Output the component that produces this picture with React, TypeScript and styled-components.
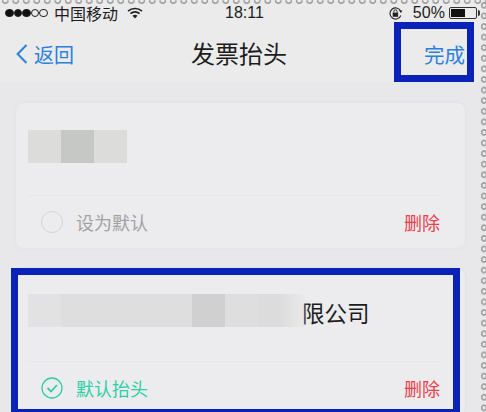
import React from 'react';
import styled, { createGlobalStyle } from 'styled-components';

const GlobalStyle = createGlobalStyle`
  html, body {
    margin:0;
    padding:0;
    background:#e9e9eb;
  }
  * {
    box-sizing:border-box;
  }
`;

const colors = {
  blue: '#2b80dc',
  mark: '#0a22b8',
  red: '#e8404c',
  teal: '#2ccfa6',
  gray: '#a2a2a2',
  black: '#1c1c1c',
};

const Page = styled.div`
  position:relative;
  width:486px;
  height:412px;
  overflow:hidden;
  background:#e8e8ea;
  font-family:"Liberation Sans","Noto Sans CJK SC",sans-serif;
  color:${colors.black};
`;

const PerfTop = styled.div`
  position:absolute;
  top:-3px;
  left:0;
  right:0;
  height:7px;
  background:radial-gradient(circle at center,#efefef 0 1.6px,#a3a3a3 2.2px 3.3px,transparent 3.8px) 0 0 / 10.5px 7px repeat-x;
`;

const PerfRight = styled.div`
  position:absolute;
  top:0;
  right:0;
  bottom:0;
  width:8px;
  background:radial-gradient(circle at center,#efefef 0 1.2px,#a3a3a3 1.8px 3px,transparent 3.5px) 2px 0 / 8px 10.6px repeat-y;
`;

const Header = styled.header`
  background:#ebebec;
`;

const StatusBar = styled.div`
  display:flex;
  align-items:center;
  height:26px;
  padding:0 0 0 5px;
  font-size:16px;
`;

const Signal = styled.div`
  display:flex;
  flex:none;
  width:49px;
`;

const Dot = styled.span<{ $on?: boolean }>`
  width:8.5px;
  height:8.5px;
  border-radius:50%;
  border:1px solid #222;
  background:${p => (p.$on ? '#111' : 'transparent')};
`;

const Carrier = styled.span`
  flex:none;
  width:73px;
`;

const Clock = styled.span`
  flex:none;
  margin:0 124px 0 82px;
`;

const Percent = styled.span`
  flex:none;
  width:30px;
  margin:0 6px 0 10px;
`;

const Battery = styled.div`
  position:relative;
  flex:none;
  width:28px;
  height:12px;
  padding:1px;
  border:1px solid #333;
  border-radius:2px;
  &:after {
    content:'';
    position:absolute;
    top:2px;
    right:-4px;
    width:2px;
    height:6px;
    background:#333;
    border-radius:0 2px 2px 0;
  }
`;

const BatteryLevel = styled.div`
  width:14px;
  height:100%;
  background:#111;
`;

const NavBar = styled.nav`
  display:flex;
  align-items:center;
  justify-content:space-between;
  height:56px;
  padding:0 21px 0 16px;
`;

const BackLink = styled.span`
  display:flex;
  align-items:center;
  gap:6px;
  font-size:20px;
  color:${colors.blue};
`;

const Title = styled.h1`
  margin:1px 16px 0 -4px;
  font-size:24px;
  font-weight:400;
  line-height:1;
`;

const DoneLink = styled.span`
  position:relative;
  font-size:20.5px;
  color:${colors.blue};
`;

const DoneMark = styled.div`
  position:absolute;
  top:-17px;
  right:-9px;
  width:80px;
  height:60px;
  border:7px solid ${colors.mark};
`;

const List = styled.main`
  display:flex;
  flex-direction:column;
  gap:21px;
  padding:21px 21px 0 16px;
`;

const Card = styled.section`
  position:relative;
  flex:none;
  height:145px;
  border-radius:8px;
  background:#ececee;
  box-shadow:0 0 4px rgba(0,0,0,.04);
`;

const CardTitle = styled.div<{ $top: number }>`
  display:flex;
  align-items:flex-start;
  height:92px;
  padding:${p => p.$top}px 0 0 12px;
`;

const Block = styled.span<{ $w: number; $c: string }>`
  flex:none;
  width:${p => p.$w}px;
  height:33px;
  background:${p => p.$c};
`;

const FadeBlock = styled.span`
  position:relative;
  z-index:1;
  flex:none;
  width:52px;
  height:33px;
  margin-right:-8px;
  background:linear-gradient(90deg,#dcdcdc,#dcdcdc 40%,rgba(224,224,224,0));
`;

const CompanyText = styled.span`
  margin-top:1px;
  font-size:22.5px;
  line-height:40px;
`;

const CardFooter = styled.div`
  display:flex;
  align-items:center;
  height:53px;
  margin:0 25px 0 12px;
  padding-left:13px;
  border-top:1px solid #e7e7e8;
`;

const FooterLabel = styled.span<{ $active?: boolean }>`
  flex:1;
  margin-left:13px;
  font-size:18px;
  color:${p => (p.$active ? colors.teal : colors.gray)};
`;

const DeleteLink = styled.span`
  font-size:18px;
  color:${colors.red};
`;

const Radio = styled.span`
  flex:none;
  width:22px;
  height:22px;
  border-radius:50%;
  border:1px solid #d4d4d4;
`;

const CardMark = styled.div`
  position:absolute;
  top:-1px;
  left:-5px;
  right:5px;
  height:148px;
  border:7px solid ${colors.mark};
  pointer-events:none;
`;

const StatusSvg = styled.svg`
  flex:none;
`;

const ChevronIcon = () => (
  <svg width="12" height="20" viewBox="0 0 12 20" fill="none">
    <path d="M10.5 1 L1.6 10 L10.5 19" stroke={colors.blue} strokeWidth="2" />
  </svg>
);

const WifiIcon = () => (
  <StatusSvg width="16" height="12" viewBox="0 0 16 12" fill="none">
    <path d="M1 4.2 C5 .6 11 .6 15 4.2" stroke="#222" strokeWidth="1.6" />
    <path d="M3.4 6.6 C6 4.3 10 4.3 12.6 6.6" stroke="#222" strokeWidth="1.6" />
    <path d="M5.5 8.7 L8 11.5 L10.5 8.7 C9 7.5 7 7.5 5.5 8.7 Z" fill="#222" />
  </StatusSvg>
);

const LockIcon = () => (
  <StatusSvg width="15" height="15" viewBox="0 0 15 15" fill="none">
    <path d="M12.8 9.5 A5.6 5.6 0 1 1 12.6 5" stroke="#222" strokeWidth="1.1" />
    <path d="M11 4.6 L14.4 4.6 L12.8 7 Z" fill="#222" />
    <rect x="4.7" y="6.6" width="5.4" height="4.2" fill="#222" />
    <path d="M5.8 6.6 V5.4 A1.6 1.6 0 0 1 9 5.4 V6.6" stroke="#222" />
  </StatusSvg>
);

const CheckIcon = () => (
  <svg width="22" height="22" viewBox="0 0 22 22" fill="none">
    <circle cx="11" cy="11" r="10" stroke={colors.teal} strokeWidth="1.3" />
    <path d="M6.5 11 L10 14.5 L16 8" stroke={colors.teal} strokeWidth="1.8" />
  </svg>
);

const App = () => (
  <Page>
    <GlobalStyle />
    <Header>
      <StatusBar>
        <Signal>
          <Dot $on />
          <Dot $on />
          <Dot $on />
          <Dot />
          <Dot />
        </Signal>
        <Carrier>中国移动</Carrier>
        <WifiIcon />
        <Clock>18:11</Clock>
        <LockIcon />
        <Percent>50%</Percent>
        <Battery>
          <BatteryLevel />
        </Battery>
      </StatusBar>
      <NavBar>
        <BackLink>
          <ChevronIcon />
          返回
        </BackLink>
        <Title>发票抬头</Title>
        <DoneLink>
          完成
          <DoneMark />
        </DoneLink>
      </NavBar>
    </Header>
    <List>
      <Card>
        <CardTitle $top={27}>
          <Block $w={33} $c="#dcdcdb" />
          <Block $w={33} $c="#c6c8c5" />
          <Block $w={33} $c="#dcdcda" />
        </CardTitle>
        <CardFooter>
          <Radio />
          <FooterLabel>设为默认</FooterLabel>
          <DeleteLink>删除</DeleteLink>
        </CardFooter>
      </Card>
      <Card>
        <CardTitle $top={25}>
          <Block $w={33} $c="#e2e2e2" />
          <Block $w={131} $c="#dedede" />
          <Block $w={33} $c="#d0d0d0" />
          <Block $w={33} $c="#dedede" />
          <FadeBlock />
          <CompanyText>限公司</CompanyText>
        </CardTitle>
        <CardFooter>
          <CheckIcon />
          <FooterLabel $active>默认抬头</FooterLabel>
          <DeleteLink>删除</DeleteLink>
        </CardFooter>
        <CardMark />
      </Card>
    </List>
    <PerfTop />
    <PerfRight />
  </Page>
);

export default App;
